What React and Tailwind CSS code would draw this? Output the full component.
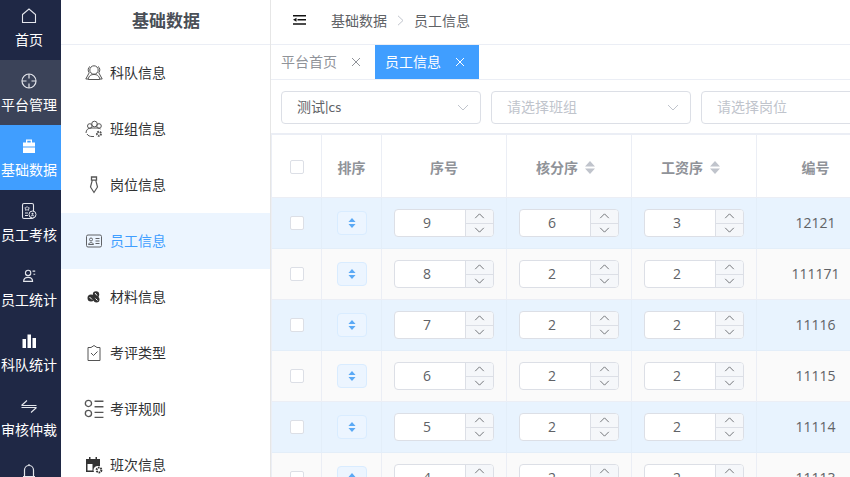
import React from 'react'

const FONT = "font-['Open_Sans','Noto_Sans_CJK_SC',sans-serif]"

/** Small helper so every drawn icon shares the same stroke setup. */
function Stroke({ size = 18, className = '', children }) {
  return (
    <svg width={size} height={size} viewBox="0 0 18 18" fill="none" stroke="currentColor" strokeWidth="1" className={className}>
      {children}
    </svg>
  )
}

const railItems = [
  {
    label: '首页',
    bg: '',
    icon: <Stroke size={18}><path d="M2.500 7.500 9 2l6.500 5.500v8h-13z" strokeWidth="1.100" /></Stroke>,
  },
  {
    label: '平台管理',
    bg: 'bg-[#3b4359]',
    icon: (
      <Stroke size={18}>
        <circle cx="9" cy="9" r="7" strokeWidth="1.200" />
        <path d="M9 2v4.500M9 11.500V16M2 9h4.500M11.500 9H16" strokeWidth="1.200" />
      </Stroke>
    ),
  },
  {
    label: '基础数据',
    bg: 'bg-[#409eff]',
    icon: (
      <svg width="16" height="16" viewBox="0 0 16 16" fill="white">
        <path d="M5 1.500h6v3h3v4H2v-4h3zM6.300 2.800v1.700h3.400V2.800zM2 9.500h12V15H2z" fillRule="evenodd" />
      </svg>
    ),
  },
  {
    label: '员工考核',
    bg: '',
    icon: (
      <Stroke size={18}>
        <rect x="2.500" y="1.500" width="11" height="15" rx="1.500" strokeWidth="1.100" />
        <path d="M7 4.500l1 1.200 1.500.2-1 1 .2 1.400L7 7.700l-1.500.6.200-1.400-1-1 1.500-.2z" strokeWidth="0.800" />
        <path d="M5 11h3M5 13.500h3" />
        <circle cx="12.500" cy="12.500" r="3.500" fill="#1f2845" strokeWidth="1" />
        <circle cx="12.500" cy="11.700" r="1" fill="currentColor" stroke="none" />
        <path d="M10.800 14.300c.5-1 3-1 3.400 0" />
      </Stroke>
    ),
  },
  {
    label: '员工统计',
    bg: '',
    icon: (
      <Stroke size={16}>
        <circle cx="8" cy="5.500" r="3" strokeWidth="1.300" />
        <path d="M3 15c0-6 10-6 10 0z" strokeWidth="1.300" />
        <path d="M13 3.500h3M14 7h2" strokeWidth="1.200" />
      </Stroke>
    ),
  },
  {
    label: '科队统计',
    bg: '',
    icon: (
      <svg width="16" height="16" viewBox="0 0 16 16" fill="white">
        <path d="M1.500 6h3.500v9H1.500zM6.500 1.500H10V15H6.500zM11.500 5H15v10h-3.500z" />
      </svg>
    ),
  },
  {
    label: '审核仲裁',
    bg: '',
    icon: (
      <Stroke size={18}>
        <path d="M1.500 8.500 7 3.500M1.500 8.500h15M16.500 10.500h-15M16.500 10.500 11 15.500" strokeWidth="1.100" />
      </Stroke>
    ),
  },
  {
    label: '消息通知',
    bg: '',
    icon: (
      <Stroke size={18}>
        <path d="M3 14.500h12M4.500 14.500V8a4.500 4.500 0 0 1 9 0v6.500M9 2v1.500" strokeWidth="1.200" />
      </Stroke>
    ),
  },
]

const menuItems = [
  {
    label: '科队信息',
    icon: (
      <Stroke>
        <circle cx="9" cy="6" r="4.200" />
        <path d="M3.200 15.500c.5-4 3-5 5.800-5s5.300 1 5.800 5zM5 2.500C3 3.500 2.500 6.500 4.200 8.800L.8 15h2.400M13 2.500c2 1 2.500 4 .8 6.300l3.400 6.200h-2.400" />
      </Stroke>
    ),
  },
  {
    label: '班组信息',
    icon: (
      <Stroke>
        <circle cx="9.500" cy="4" r="2.800" />
        <circle cx="4.800" cy="6" r="2.300" />
        <circle cx="14" cy="6" r="2.300" />
        <path d="M1 13c0-3 2-5 5-5h7c1 0 2 .5 2.500 1M2 14c1 1.800 3 2.500 5 2.500h2" />
        <circle cx="14" cy="13.800" r="2" strokeWidth="2" strokeDasharray="1.500 .8" />
      </Stroke>
    ),
  },
  {
    label: '岗位信息',
    icon: (
      <Stroke>
        <path d="M6.500 1h5v3.200h-5z" strokeWidth="1.300" />
        <path d="M7.300 4.200 5.500 11 9 16.500l3.500-5.500-1.800-6.800" strokeWidth="1.200" />
      </Stroke>
    ),
  },
  {
    label: '员工信息',
    active: true,
    icon: (
      <Stroke>
        <rect x="1.500" y="3" width="15" height="12" rx="1.500" />
        <circle cx="6" cy="7.500" r="1.500" />
        <path d="M3.500 12.500c.3-2.500 4.700-2.500 5 0zM10.500 6.500h4M10.500 9h4M10.500 11.500h4" />
      </Stroke>
    ),
  },
  {
    label: '材料信息',
    icon: (
      <svg width="18" height="18" viewBox="0 0 18 18" fill="#333">
        <circle cx="6" cy="10" r="3.500" />
        <circle cx="11" cy="6.500" r="3.200" />
        <circle cx="11.500" cy="11.500" r="3" />
        <path d="M4.500 9l2.500 2.500M10 5l2 2.500M10.500 10.500l2 2" stroke="white" strokeWidth="1" />
      </svg>
    ),
  },
  {
    label: '考评类型',
    icon: (
      <Stroke>
        <path d="M6 3.500 9 1.500l3 2h3v13H3v-13z" />
        <path d="M6 9l2.500 2.500L12.500 7.500" />
      </Stroke>
    ),
  },
  {
    label: '考评规则',
    icon: (
      <Stroke size={20}>
        <circle cx="4" cy="4" r="2.800" strokeWidth="1.200" />
        <circle cx="4" cy="13" r="2.800" strokeWidth="1.200" />
        <path d="M9.500 2h8M9.500 7h8M9.500 12h8M9.500 16.500h8" strokeWidth="1.200" />
      </Stroke>
    ),
  },
  {
    label: '班次信息',
    icon: (
      <svg width="18" height="18" viewBox="0 0 18 18" fill="#333">
        <path d="M1 3h3V1h1.500v2h5V1H12v2h3v7h-3a4 4 0 0 0-3 6H1zM2.500 8v6.500h5V8z" fillRule="evenodd" />
        <circle cx="14" cy="14" r="2.400" fill="none" stroke="#333" strokeWidth="2" strokeDasharray="1.500 .8" />
      </svg>
    ),
  },
]

const rows = [
  { order: 9, score: 6, pay: 3, code: '12121' },
  { order: 8, score: 2, pay: 2, code: '111171' },
  { order: 7, score: 2, pay: 2, code: '11116' },
  { order: 6, score: 2, pay: 2, code: '11115' },
  { order: 5, score: 2, pay: 2, code: '11114' },
  { order: 4, score: 2, pay: 2, code: '11113' },
]

function Chevron({ className = '' }) {
  return (
    <svg width="12" height="7" viewBox="0 0 12 7" fill="none" stroke="currentColor" strokeWidth="1" className={className}>
      <path d="M1 1l5 5 5-5" />
    </svg>
  )
}

function Select({ children, arrow = true, className = '' }) {
  return (
    <div className={`flex h-[33px] shrink-0 items-center justify-between rounded-[4px] border border-[#dcdfe6] pb-[3px] pl-[15px] pr-[11px] text-[14px] ${className}`}>
      {children}
      {arrow && <Chevron className="mt-[3px] text-[#c0c4cc]" />}
    </div>
  )
}

function SortCaret() {
  return (
    <svg width="10" height="13" viewBox="0 0 10 13" fill="#c0c4cc" className="ml-[7px]">
      <path d="M5 0l5 5.500H0zM5 13l5-5.500H0z" />
    </svg>
  )
}

function NumberBox({ value }) {
  return (
    <div className="flex h-[28px] w-[100px] overflow-hidden rounded-[4px] border border-[#dcdfe6] bg-white">
      <div className="flex flex-1 items-center justify-center pb-[2px] pr-[6px] text-[14px] text-[#606266]">{value}</div>
      <div className="flex w-[28px] flex-col border-l border-[#dcdfe6] bg-[#f5f7fa] text-[#606266]">
        <div className="flex flex-1 items-center justify-center border-b border-[#dcdfe6]">
          <Chevron className="h-[6px] w-[11px] rotate-180" />
        </div>
        <div className="flex flex-1 items-center justify-center">
          <Chevron className="h-[6px] w-[11px]" />
        </div>
      </div>
    </div>
  )
}

function Checkbox() {
  return <div className="h-[14px] w-[14px] rounded-[2px] border border-[#dcdfe6] bg-white" />
}

const cols = ['w-[50px]', 'w-[60px]', 'w-[125px]', 'w-[125px]', 'w-[125px]', 'w-[118px]']

function HeadCell({ col, className = '', children }) {
  return (
    <div className={`flex h-full shrink-0 items-center justify-center border-r border-[#ebeef5] pt-[2px] text-[14px] font-bold text-[#909399] ${cols[col]} ${className}`}>
      {children}
    </div>
  )
}

function BodyCell({ col, border, children }) {
  return (
    <div className={`flex h-full shrink-0 items-center justify-center border-r ${border} ${cols[col]}`}>
      {children}
    </div>
  )
}

function TableRow({ row, striped }) {
  const bg = striped ? 'bg-[#e8f3fe]' : 'bg-[#fafafa]'
  const line = striped ? 'border-[#e3eef9]' : 'border-[#ebeef5]'
  return (
    <div className={`flex h-[51px] shrink-0 border-b ${line} ${bg}`}>
      <BodyCell col={0} border={line}><Checkbox /></BodyCell>
      <BodyCell col={1} border={line}>
        <div className="flex h-[24px] w-[30px] items-center justify-center rounded-[4px] border border-[#d9ecff] bg-[#ecf5ff]">
          <svg width="8" height="10" viewBox="0 0 9 11" fill="#5aa9f5">
            <path d="M4.500 0 8.500 4.500H.5zM4.500 11 8.500 6.500H.5z" />
          </svg>
        </div>
      </BodyCell>
      <BodyCell col={2} border={line}><NumberBox value={row.order} /></BodyCell>
      <BodyCell col={3} border={line}><NumberBox value={row.score} /></BodyCell>
      <BodyCell col={4} border={line}><NumberBox value={row.pay} /></BodyCell>
      <BodyCell col={5} border={line}><span className="pb-[2px] text-[14px] text-[#606266]">{row.code}</span></BodyCell>
    </div>
  )
}

export default function App() {
  return (
    <div className={`flex h-[477px] w-[850px] overflow-hidden bg-white ${FONT}`}>
      {/* Icon rail */}
      <div className="-mt-[5px] flex w-[61px] shrink-0 flex-col self-start bg-[#1f2845]">
        {railItems.map((item) => (
          <div key={item.label} className={`flex h-[65px] shrink-0 flex-col items-center justify-center pr-[3px] text-white ${item.bg}`}>
            <div className="flex h-[22px] items-center justify-center text-[#e4e6ec]">{item.icon}</div>
            <div className="mt-[3px] whitespace-nowrap text-[14px] leading-[20px]">{item.label}</div>
          </div>
        ))}
      </div>

      {/* Secondary menu */}
      <div className="flex w-[210px] shrink-0 flex-col border-r border-[#e6e6e6]">
        <div className="flex h-[45px] shrink-0 items-center justify-center border-b border-[#ebeef5] pb-[2px] pl-[1px] text-[17px] font-bold text-[#4a4f57]">
          基础数据
        </div>
        {menuItems.map((item) => (
          <div
            key={item.label}
            className={`flex h-[56px] shrink-0 items-center pl-[23px] text-[14px] ${item.active ? 'bg-[#ecf5ff] text-[#409eff]' : 'text-[#303133]'}`}
          >
            <span className={`flex w-[20px] items-center justify-center ${item.active ? 'text-[#606266]' : 'text-[#555]'}`}>{item.icon}</span>
            <span className="mb-[2px] ml-[6px]">{item.label}</span>
          </div>
        ))}
      </div>

      {/* Main */}
      <div className="flex min-w-0 flex-1 flex-col overflow-hidden">
        <div className="flex h-[45px] shrink-0 items-center border-b border-[#ebeef5] pb-[4px] pl-[22px]">
          <svg width="13" height="10" viewBox="0 0 13 10" fill="#111">
            <path d="M0 0h13v1.500H0zM4.500 4H13v1.500H4.500zM0 8.200h13v1.500H0zM3.500 2.800v4L0 4.800z" />
          </svg>
          <span className="ml-[25px] text-[14px] text-[#606266]">基础数据</span>
          <svg width="7" height="11" viewBox="0 0 7 11" fill="none" stroke="#c0c4cc" className="mx-[10px]">
            <path d="M1 .8 6 5.500 1 10.200" />
          </svg>
          <span className="text-[14px] text-[#606266]">员工信息</span>
        </div>

        <div className="flex h-[35px] shrink-0 border-b border-[#ebeef5]">
          <div className="flex w-[104px] items-center pl-[10px] text-[14px] text-[#909399]">
            <span className="mb-[2px]">平台首页</span>
            <svg width="10" height="10" viewBox="0 0 10 10" stroke="#909399" className="ml-[14px]"><path d="M1 1l8 8M9 1l-8 8" /></svg>
          </div>
          <div className="flex h-[34px] w-[104px] items-center bg-[#409eff] pl-[10px] text-[14px] text-white">
            <span className="mb-[2px]">员工信息</span>
            <svg width="10" height="10" viewBox="0 0 10 10" stroke="white" className="ml-[14px]"><path d="M1 1l8 8M9 1l-8 8" /></svg>
          </div>
        </div>

        <div className="flex h-[53px] shrink-0 items-start gap-[10px] pl-[10px] pt-[11px]">
          <Select className="w-[200px]">
            <span className="text-[#606266]">测试<span className="font-['Lato',sans-serif]">|cs</span></span>
          </Select>
          <Select className="w-[200px]"><span className="text-[#c0c4cc]">请选择班组</span></Select>
          <Select arrow={false} className="w-[200px]"><span className="text-[#c0c4cc]">请选择岗位</span></Select>
        </div>

        <div className="flex min-h-0 flex-1 flex-col border-l border-t-2 border-[#ebeef5]">
          <div className="flex h-[63px] shrink-0 border-b border-[#ebeef5] bg-white">
            <HeadCell col={0}><Checkbox /></HeadCell>
            <HeadCell col={1}>排序</HeadCell>
            <HeadCell col={2}>序号</HeadCell>
            <HeadCell col={3} className="pr-[7px]">核分序<SortCaret /></HeadCell>
            <HeadCell col={4} className="pr-[7px]">工资序<SortCaret /></HeadCell>
            <HeadCell col={5}>编号</HeadCell>
          </div>
          {rows.map((row, i) => (
            <TableRow key={row.code} row={row} striped={i % 2 === 0} />
          ))}
        </div>
      </div>
    </div>
  )
}
